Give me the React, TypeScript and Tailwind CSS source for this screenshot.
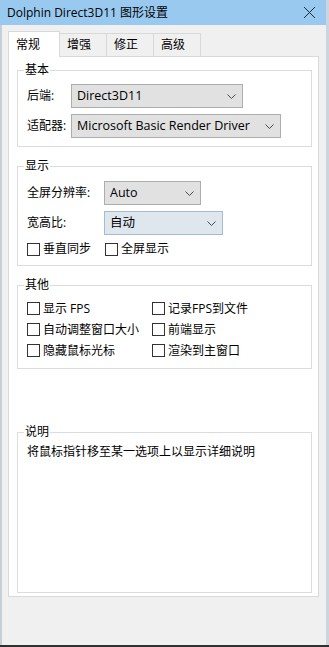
import React from "react";

type ComboProps = { value: string; width: string; focused?: boolean };

function Chevron() {
  return (
    <svg width="9" height="5" viewBox="0 0 9 5" className="shrink-0">
      <polyline points="0.5,0.5 4.5,4.5 8.5,0.5" fill="none" stroke="#4a4a4a" strokeWidth="1" />
    </svg>
  );
}

function Combo({ value, width, focused }: ComboProps) {
  return (
    <div
      className={`${width} h-[24px] flex items-center justify-between pl-[5px] pr-[6px] border ${
        focused ? "bg-[#dee6ee] border-[#a5bbd1]" : "bg-[#e1e1e1] border-[#adadad]"
      }`}
    >
      <span className="text-[12.5px] leading-[16px] text-black whitespace-nowrap">{value}</span>
      <Chevron />
    </div>
  );
}

function Check({ label, width }: { label: string; width?: string }) {
  return (
    <div className={`flex items-center gap-[3px] ${width ?? ""}`}>
      <span className="w-[13px] h-[13px] border border-[#333333] bg-white shrink-0" />
      <span className="text-[12px] leading-[16px] whitespace-nowrap">{label}</span>
    </div>
  );
}

function Group({ title, className, children }: { title: string; className?: string; children?: React.ReactNode }) {
  return (
    <fieldset className={`border border-[#dcdcdc] min-w-0 ml-[8px] mr-[6px] ${className ?? ""}`}>
      <legend className="ml-[6px] px-[1px] text-[12px] leading-[16px]">{title}</legend>
      {children}
    </fieldset>
  );
}

const TABS = ["常规", "增强", "修正", "高级"];

export default function App() {
  return (
    <div className="w-[329px] h-[647px] flex flex-col bg-[#2f3130] font-['Open_Sans','Noto_Sans_CJK_SC',sans-serif] text-black">
      <div className="flex h-[645px] bg-[#cdd4db]">
        {/* Window */}
        <div className="w-[326px] h-full flex flex-col bg-[#f0f0f0]">
          {/* Title bar */}
          <div className="h-[25px] shrink-0 bg-[#99c9ef] flex items-center justify-between pl-[7px] pr-[10px]">
            <span className="text-[12px] leading-[16px] whitespace-nowrap">Dolphin Direct3D11 图形设置</span>
            <svg width="13" height="13" viewBox="0 0 13 13">
              <path d="M1 1 L12 12 M12 1 L1 12" stroke="#1b2a3a" strokeWidth="1" />
            </svg>
          </div>

          {/* Body */}
          <div className="flex-1 flex flex-col border-l-2 border-[#c6ced6] pl-[6px] pr-[7px] pt-[6px] pb-[48px]">
            {/* Tabs */}
            <div className="flex items-end h-[25px] shrink-0">
              {TABS.map((t, i) =>
                i === 0 ? (
                  <div
                    key={t}
                    className="relative z-10 w-[52px] h-[26px] -mb-px bg-white border border-b-0 border-[#d9d9d9] flex items-center pl-[7px] text-[12px] leading-[16px]"
                  >
                    {t}
                  </div>
                ) : (
                  <div
                    key={t}
                    className="w-[47px] h-[23px] bg-[#f0f0f0] border border-b-0 border-l-0 border-[#d9d9d9] flex items-center pl-[7px] text-[12px] leading-[16px]"
                  >
                    {t}
                  </div>
                )
              )}
            </div>

            {/* Panel */}
            <div className="flex-1 flex flex-col bg-white border border-[#d9d9d9] pt-[5px] pb-[3px]">
              <Group title="基本">
                <div className="flex flex-col gap-[6px] pl-[9px] pt-[6px] pb-[8px]">
                  <div className="flex items-center">
                    <span className="w-[44px] text-[12px] leading-[16px]">后端:</span>
                    <Combo value="Direct3D11" width="w-[172px]" />
                  </div>
                  <div className="flex items-center">
                    <span className="w-[44px] text-[12px] leading-[16px]">适配器:</span>
                    <Combo value="Microsoft Basic Render Driver" width="w-[210px]" />
                  </div>
                </div>
              </Group>

              <Group title="显示" className="mt-[11px]">
                <div className="flex flex-col pl-[9px] pt-[7px] pb-[6px]">
                  <div className="flex items-center">
                    <span className="w-[77px] text-[12px] leading-[16px]">全屏分辨率:</span>
                    <Combo value="Auto" width="w-[97px]" />
                  </div>
                  <div className="flex items-center mt-[6px]">
                    <span className="w-[77px] text-[12px] leading-[16px]">宽高比:</span>
                    <Combo value="自动" width="w-[119px]" focused />
                  </div>
                  <div className="flex items-center h-[20px] mt-[4px]">
                    <Check label="垂直同步" width="w-[78px]" />
                    <Check label="全屏显示" />
                  </div>
                </div>
              </Group>

              <Group title="其他" className="mt-[11px]">
                <div className="grid grid-cols-[125px_1fr] auto-rows-[21px] items-center pl-[9px] pt-[5px] pb-[7px]">
                  <Check label="显示 FPS" />
                  <Check label="记录FPS到文件" />
                  <Check label="自动调整窗口大小" />
                  <Check label="前端显示" />
                  <Check label="隐藏鼠标光标" />
                  <Check label="渲染到主窗口" />
                </div>
              </Group>

              <Group title="说明" className="mt-[55px] flex-1">
                <p className="pl-[9px] pt-[2px] text-[12px] leading-[20px] whitespace-nowrap">
                  将鼠标指针移至某一选项上以显示详细说明
                </p>
              </Group>
            </div>
          </div>
        </div>
      </div>
    </div>
  );
}
